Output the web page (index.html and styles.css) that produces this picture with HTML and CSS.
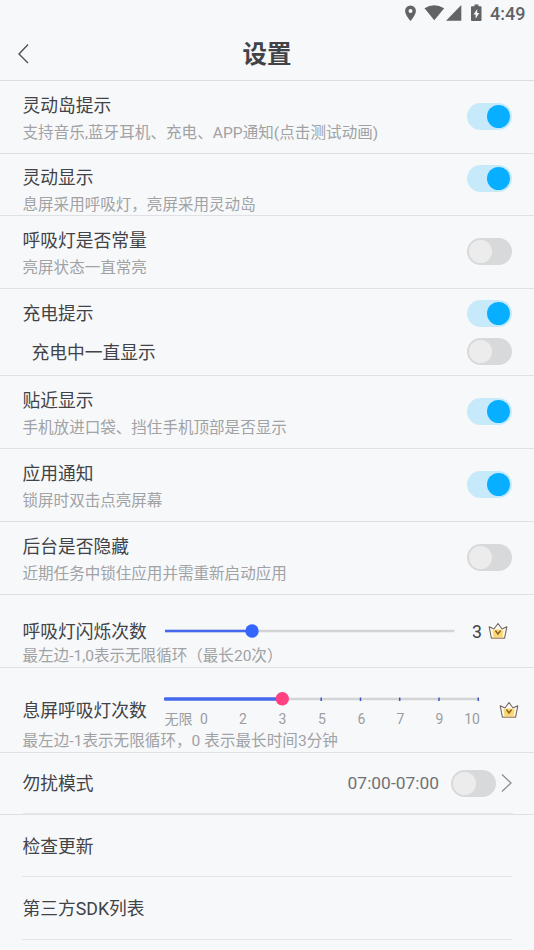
FILE: index.html
```html
<!DOCTYPE html>
<html lang="zh-CN">
<head>
<meta charset="utf-8">
<title>设置</title>
<link rel="stylesheet" href="styles.css">
</head>
<body>
<svg class="defs" width="0" height="0" aria-hidden="true">
  <symbol id="crown" viewBox="0 0 20 18">
    <path d="M1.200 4.800 6 7 10 1.500 14 7l4.800-2.200-2.200 11.400H3.400Z" fill="#fffdf5" stroke="#75665f" stroke-width="1.100" stroke-linejoin="round"/>
    <path d="M4.300 8.600 7 8l3-1 3 1 2.700.6-1.200 6.400H5.500Z" fill="#fbd970"/>
    <path d="m7.400 8.500 2.600 3.400 2.600-3.400" fill="none" stroke="#8b602b" stroke-width="1.500"/>
    <path d="M4 16h12" stroke="#dba653" stroke-width=".8"/>
  </symbol>
</svg>
<div class="status">
  <svg class="status-icons" width="82" height="20" viewBox="0 0 82 20">
    <g fill="#626364">
      <path fill-rule="evenodd" d="M6.500 3.500a5.400 5.400 0 0 0-5.400 5.400c0 4 5.400 10.100 5.400 10.100s5.400-6.100 5.400-10.100a5.400 5.400 0 0 0-5.400-5.400Zm0 3.400a2 2 0 1 1 0 4 2 2 0 0 1 0-4Z"/>
      <path d="M20.500 6.200Q30 .2 40.200 6.200L30.300 18.300Z"/>
      <path d="M57.300 3v15.700H42Z"/>
      <path fill-rule="evenodd" d="M70.500 2.500h4v1.700h2.200q.8 0 .8.800v13q0 .9-.8.900h-8.800q-.9 0-.9-.9V5q0-.8.900-.8h2.600Zm2.700 4.500-3.700 5.500h2.100v4.300l3.700-5.800h-2.100Z"/>
    </g>
  </svg>
  <span class="clock">4:49</span>
</div>
<header class="header">
  <svg class="back" width="14" height="22" viewBox="0 0 14 22"><path d="M11 1.500 2 11l9 9" fill="none" stroke="#505255" stroke-width="1.400"/></svg>
  <h1>设置</h1>
</header>
<main>
  <section class="row">
    <div class="text"><div class="title">灵动岛提示</div><div class="sub wide">支持音乐,蓝牙耳机、充电、APP通知(点击测试动画)</div></div>
    <span class="toggle on"></span>
  </section>
  <section class="row short">
    <div class="text"><div class="title">灵动显示</div><div class="sub">息屏采用呼吸灯，亮屏采用灵动岛</div></div>
    <span class="toggle on"></span>
  </section>
  <section class="row">
    <div class="text"><div class="title">呼吸灯是否常量</div><div class="sub">亮屏状态一直常亮</div></div>
    <span class="toggle"></span>
  </section>
  <section class="group">
    <div class="line"><div class="title">充电提示</div><span class="toggle on"></span></div>
    <div class="line nested"><div class="title">充电中一直显示</div><span class="toggle"></span></div>
  </section>
  <section class="row">
    <div class="text"><div class="title">贴近显示</div><div class="sub">手机放进口袋、挡住手机顶部是否显示</div></div>
    <span class="toggle on"></span>
  </section>
  <section class="row">
    <div class="text"><div class="title">应用通知</div><div class="sub">锁屏时双击点亮屏幕</div></div>
    <span class="toggle on"></span>
  </section>
  <section class="row">
    <div class="text"><div class="title">后台是否隐藏</div><div class="sub">近期任务中锁住应用并需重新启动应用</div></div>
    <span class="toggle"></span>
  </section>
  <section class="blink">
    <div class="line">
      <div class="title">呼吸灯闪烁次数</div>
      <svg class="slider" width="290" height="16" viewBox="0 0 290 16">
        <path d="M0 8h289.500" stroke="#d3d4d6" stroke-width="2.400"/>
        <path d="M0 8h87" stroke="#4568ec" stroke-width="2.400"/>
        <circle cx="87" cy="8" r="6.700" fill="#3366ff"/>
      </svg>
      <span class="value">3</span>
      <svg class="crown" width="20" height="18"><use href="#crown"/></svg>
    </div>
    <div class="sub">最左边-1,0表示无限循环（最长20次）</div>
  </section>
  <section class="breath">
    <div class="line">
      <div class="title">息屏呼吸灯次数</div>
      <div class="scale">
        <svg width="316" height="16" viewBox="0 0 316 16">
          <path d="M118 8h197" stroke="#d3d4d6" stroke-width="2.400"/>
          <path d="M1.500 8H118" stroke="#4568ec" stroke-width="3.600" stroke-linecap="round"/>
          <path d="M157.200 6.500v3.500M196.500 6.500v3.500M235.700 6.500v3.500M275 6.500v3.500M314.300 6.500v3.500" stroke="#3e55c5" stroke-width="1.500"/>
          <circle cx="118.300" cy="7.800" r="6.700" fill="#ff4081"/>
        </svg>
        <div class="ticks"><span>无限</span><span>0</span><span>2</span><span>3</span><span>5</span><span>6</span><span>7</span><span>9</span><span>10</span></div>
      </div>
      <svg class="crown" width="20" height="18"><use href="#crown"/></svg>
    </div>
    <div class="sub wide">最左边-1表示无限循环，0 表示最长时间3分钟</div>
  </section>
  <section class="quiet">
    <div class="line">
      <div class="title">勿扰模式</div>
      <span class="time">07:00-07:00</span>
      <span class="toggle"></span>
      <svg class="next" width="12" height="20" viewBox="0 0 12 20"><path d="m1 1.500 9 8.500-9 8.500" fill="none" stroke="#8c8e91" stroke-width="1.300"/></svg>
    </div>
  </section>
  <div class="link title">检查更新</div>
  <div class="link last title">第三方SDK列表</div>
</main>
</body>
</html>
```
FILE: styles.css
```css
* { box-sizing: border-box; }

body {
  margin: 0;
  height: 950px;
  overflow: hidden;
  background: #f7f8fa;
  color: #414346;
  font-family: Roboto, "Noto Sans CJK SC", sans-serif;
}

svg { display: block; flex: none; }
.defs { position: absolute; }

.status {
  display: flex;
  height: 28px;
  padding: 2px 9px 0 0;
  justify-content: flex-end;
}
.status-icons { margin-right: 4px; }
.clock {
  width: 35px;
  color: #626364;
  font-size: 18px;
  font-weight: 500;
  line-height: 24px;
  white-space: nowrap;
}

.header {
  display: grid;
  grid-template-columns: 60px 1fr 60px;
  align-items: center;
  height: 53px;
  border-bottom: 1px solid #dadcdf;
}
.back { margin-left: 17px; }
h1 {
  margin: 2px 0 0;
  font-size: 24.500px;
  font-weight: 700;
  line-height: 36px;
  text-align: center;
}

.title {
  font-size: 17.750px;
  line-height: 26px;
  white-space: nowrap;
}
.sub {
  color: #a0a2a4;
  font-size: 15.560px;
  line-height: 26px;
  white-space: nowrap;
}
.wide { letter-spacing: .05px; }

section {
  border-bottom: 1px solid #dfe1e4;
  padding: 0 22px 0 22.500px;
}
.row {
  display: flex;
  justify-content: space-between;
  height: 73px;
  padding-top: 11px;
}
.row .text { padding-top: 1px; }
.row .sub { margin-top: 1px; }
.row .toggle { margin-top: 11px; }
.short { height: 62px; }
.short .text { padding-top: 0; }
.short .toggle { margin-top: 0; }

.toggle {
  display: flex;
  flex: none;
  width: 45px;
  height: 27px;
  padding: 2px;
  border-radius: 14px;
  background: #d8d9da;
}
.toggle::before {
  content: "";
  width: 23px;
  height: 23px;
  border-radius: 50%;
  background: #ececed;
}
.toggle.on {
  justify-content: flex-end;
  background: #c6eafa;
}
.toggle.on::before { background: #08aeff; }

.line { display: flex; align-items: center; }
.group { height: 87px; padding-top: 11px; }
.group .line { height: 27px; justify-content: space-between; }
.group .nested { margin-top: 11px; padding-left: 9px; }
.nested .title { padding-top: 2px; }

.blink { height: 73px; padding-top: 23px; }
.blink .line { height: 26px; }
.blink .title { width: 142.500px; padding-top: 2px; }
.blink .slider { margin-top: -1px; }
.value { width: 16px; margin-left: 17px; padding-top: 1px; font-size: 17.700px; }
.blink .sub { margin-top: -1px; }

.breath { height: 85px; padding-top: 23px; }
.breath .line { height: 37px; align-items: flex-start; }
.breath .title { flex: none; width: 141.500px; margin-top: 7px; }
.breath .crown { margin: 10px 0 0 19px; }
.ticks {
  display: grid;
  grid-template-columns: 29px 22px 56px 23px 56px 23px 55px 23px 29px;
  width: 316px;
  color: #9b9da0;
  font-size: 14px;
  line-height: 20px;
  margin-top: 2px;
  text-align: center;
  white-space: nowrap;
}
.ticks span:last-child { text-align: right; }

.quiet { height: 62px; padding-right: 21px; }
.quiet .line { height: 61px; border-bottom: 1px solid #e5e7ea; }
.quiet .title { padding-top: 2px; }
.time {
  margin-left: auto;
  margin-right: 12px;
  color: #707274;
  font-size: 17.400px;
}
.next { margin-left: 5px; }

.link {
  height: 62px;
  margin: 0 22px;
  padding-left: .5px;
  border-bottom: 1px solid #e3e5e8;
  line-height: 64px;
}
.last { height: 63px; line-height: 65px; }
```
